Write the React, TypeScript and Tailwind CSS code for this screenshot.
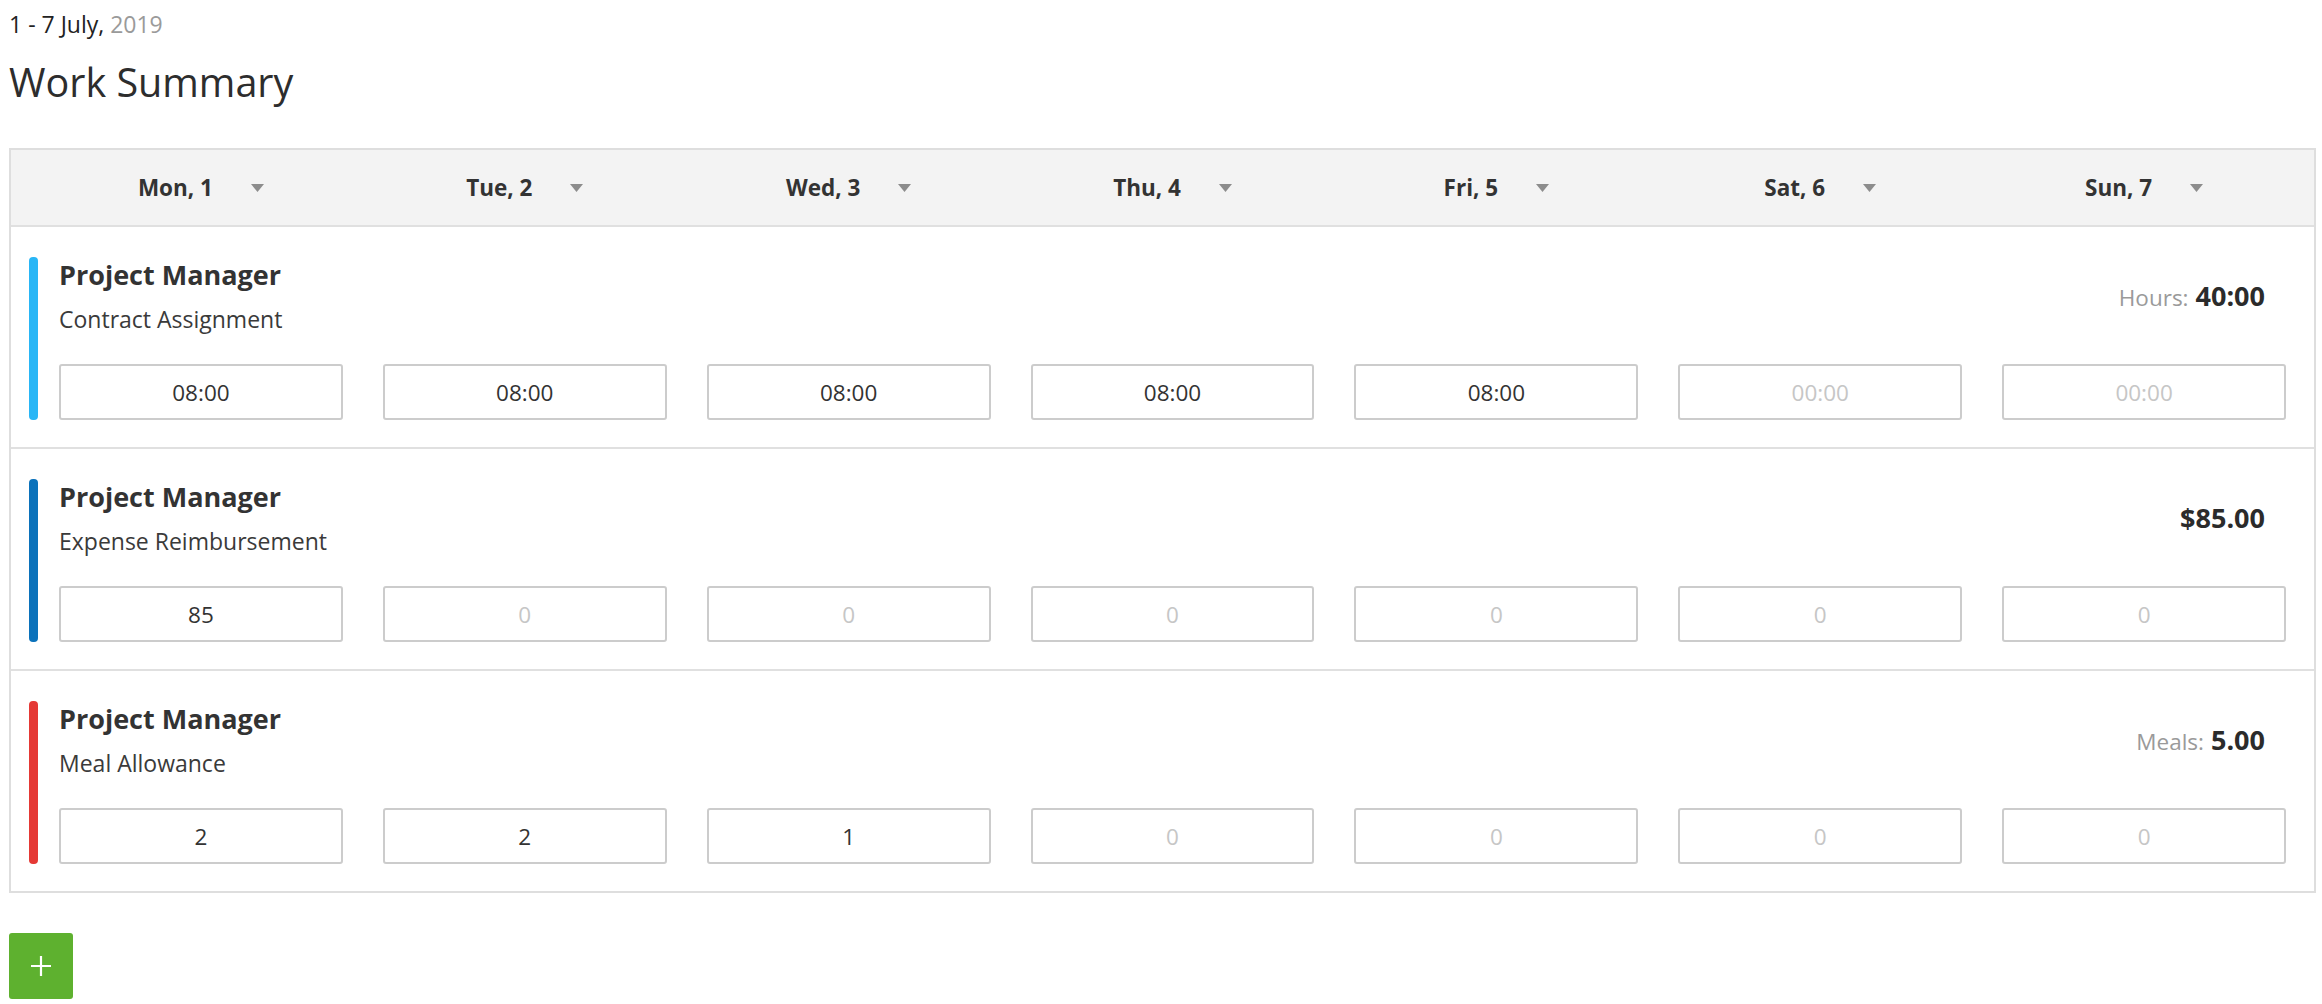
import React from "react";

const days = ["Mon, 1", "Tue, 2", "Wed, 3", "Thu, 4", "Fri, 5", "Sat, 6", "Sun, 7"];

type Row = {
	title: string;
	subtitle: string;
	bar: string;
	label?: string;
	total: string;
	values: string[];
	placeholder: string;
};

const rows: Row[] = [
	{
		title: "Project Manager",
		subtitle: "Contract Assignment",
		bar: "bg-[#29b6f6]",
		label: "Hours:",
		total: "40:00",
		values: ["08:00", "08:00", "08:00", "08:00", "08:00", "", ""],
		placeholder: "00:00",
	},
	{
		title: "Project Manager",
		subtitle: "Expense Reimbursement",
		bar: "bg-[#0b72bb]",
		total: "$85.00",
		values: ["85", "", "", "", "", "", ""],
		placeholder: "0",
	},
	{
		title: "Project Manager",
		subtitle: "Meal Allowance",
		bar: "bg-[#e53935]",
		label: "Meals:",
		total: "5.00",
		values: ["2", "2", "1", "", "", "", ""],
		placeholder: "0",
	},
];

function Caret() {
	return (
		<svg width="13" height="8" viewBox="0 0 13 8" className="ml-[38px] shrink-0">
			<path d="M0 0 H13 L6.5 8 Z" fill="#8c8c8c" />
		</svg>
	);
}

function EntryRow({ row, last }: { row: Row; last: boolean }) {
	return (
		<div className={`flex pl-[18px] pr-[28px] pt-[30px] pb-[27px] ${last ? "" : "border-b-2 border-[#e0e0e0]"}`}>
			<div className={`w-[9px] shrink-0 rounded-[4px] ${row.bar}`} />
			<div className="flex-1 ml-[21px]">
				<div className="flex items-center justify-between pr-[21px]">
					<div>
						<div className="text-[27px] leading-[35px] font-bold text-[#333333]">{row.title}</div>
						<div className="mt-[11px] text-[23px] leading-[33px] text-[#3a3a3a]">{row.subtitle}</div>
					</div>
					<div className="flex items-baseline">
						{row.label ? <span className="text-[22.5px] text-[#9a9a9a] mr-[7px]">{row.label}</span> : null}
						<span className="text-[27px] font-bold text-[#2b2b2b]">{row.total}</span>
					</div>
				</div>
				<div className="mt-[28px] grid grid-cols-7 gap-[40px]">
					{row.values.map((v, i) => (
						<input
							key={i}
							readOnly
							value={v}
							placeholder={row.placeholder}
							className="h-[56px] w-full min-w-0 rounded-[3px] border-2 border-[#cccccc] bg-white text-center text-[22.5px] text-[#333333] placeholder:text-[#c6c6c6] outline-none"
						/>
					))}
				</div>
			</div>
		</div>
	);
}

export default function App() {
	return (
		<div className="min-h-screen bg-white pl-[9px] pr-[6px] pt-[7px] font-['Open_Sans',sans-serif] text-[#333333]">
			<div className="text-[23px] leading-[34px] text-[#222222]">
				1 - 7 July, <span className="text-[#9a9a9a]">2019</span>
			</div>
			<h1 className="mt-[18px] text-[39.5px] leading-[47px] font-medium text-[#2d2d2d]">Work Summary</h1>

			<div className="mt-[42px] border-2 border-[#dedede]">
				<div className="flex h-[77px] items-center border-b-2 border-[#e0e0e0] bg-[#f3f3f3] pl-[48px] pr-[28px]">
					<div className="grid w-full grid-cols-7 gap-[40px]">
						{days.map((d) => (
							<div key={d} className="flex items-center justify-center">
								<span className="text-[22.5px] font-bold text-[#333333]">{d}</span>
								<Caret />
							</div>
						))}
					</div>
				</div>
				{rows.map((r, i) => (
					<EntryRow key={i} row={r} last={i === rows.length - 1} />
				))}
			</div>

			<button
				type="button"
				className="mt-[40px] flex h-[66px] w-[64px] items-center justify-center rounded-[3px] bg-[#5eb12f]"
			>
				<svg width="22" height="22" viewBox="0 0 22 22">
					<path d="M11 1 V21 M1 11 H21" stroke="white" strokeWidth="2.2" />
				</svg>
			</button>
		</div>
	);
}
